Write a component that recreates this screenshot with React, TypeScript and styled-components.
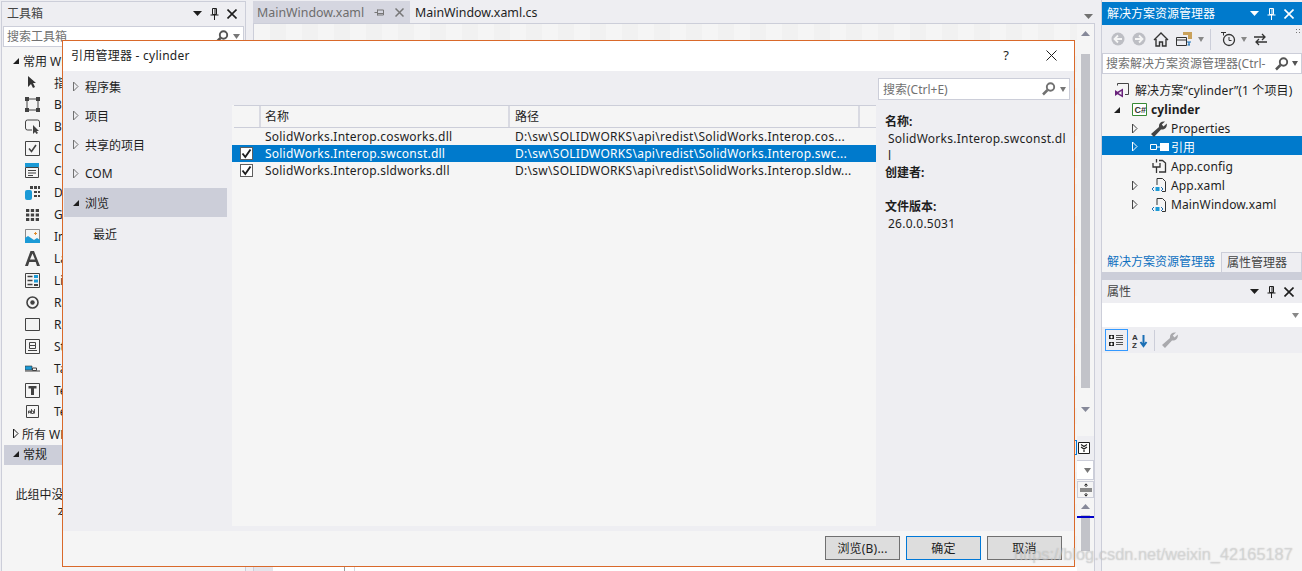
import React from "react";
import styled, { createGlobalStyle } from "styled-components";

const Global = createGlobalStyle`
  html, body { margin: 0; padding: 0; background: #eeeef2; }
  body { font-family: "Noto Sans", "Noto Sans CJK SC", sans-serif; font-size: 12px; color: #1e1e1e; }
  * { box-sizing: border-box; }
`;

const Page = styled.div`
  position: relative; width: 1302px; height: 571px; overflow: hidden; background: #eeeef2;
  display: flex; align-items: stretch; padding-top: 2px;
`;

/* ---------- tool window chrome ---------- */
const ToolWindow = styled.section<{ $w: number }>`
  width: ${p => p.$w}px; flex: none; display: flex; flex-direction: column;
`;
const ToolboxWindow = styled(ToolWindow)`
  margin: -1px 0 0 1px; border: 1px solid #ccced9; border-bottom: 0; 
`;
const TitleBar = styled.div<{ $active?: boolean }>`
  height: 23px; flex: none; display: flex; align-items: center; padding: 0 8px 0 5px; gap: 6px;
  background: ${p => (p.$active ? "#007acc" : "#eeeef2")};
  color: ${p => (p.$active ? "#ffffff" : "#444444")};
`;
const TitleText = styled.span`white-space: nowrap; line-height: 23px;`;
const Grip = styled.span<{ $light?: boolean }>`
  flex: 1; height: 5px; margin: 0 2px 0 4px;
  background-image: radial-gradient(${p => (p.$light ? "#5aa7dd" : "#b4b5bd")} 0.6px, transparent 0.7px);
  background-size: 2px 2px;
`;
const TitleBtns = styled.span`display: flex; align-items: center; gap: 8px; flex: none;`;

const Search = styled.div`
  display: flex; align-items: center; height: 21px; flex: none; background: #fff;
  border: 1px solid #ccced9; padding: 0 3px 0 3px; color: #717171; white-space: nowrap; overflow: hidden;
`;
const ToolboxSearch = styled(Search)`margin: 1px 1px 0 1px;`;
const SearchText = styled.span`flex: 1; overflow: hidden; line-height: 19px;`;
const Spacer = styled.span<{ $w: number }>`width: ${p => p.$w}px; flex: none;`;

const Tree = styled.div`flex: 1; background: #f5f5f5; min-height: 0;`;
const ToolboxTree = styled(Tree)`padding-top: 3px; margin-top: 0;`;
const ToolHeader = styled.div<{ $sel?: boolean; $h?: number }>`
  display: flex; align-items: center; height: ${p => p.$h ?? 21.95}px; gap: 3px; padding: 0 0 ${p => (p.$sel ? 1 : 0)}px 8px;
  margin-left: 2px; background: ${p => (p.$sel ? "#ccced9" : "transparent")}; white-space: nowrap;
`;
const ToolItem = styled.div`
  display: flex; align-items: center; height: 21.95px; padding-left: 20px; gap: 12px; white-space: nowrap;
`;
const ToolIcon = styled.span`width: 20px; height: 20px; flex: none; display: flex; align-items: center; justify-content: center;`;
const EmptyNote = styled.div`
  margin: 21px auto 0; width: 218px; line-height: 17px; text-align: center;
`;

/* ---------- editor ---------- */
const EditorCol = styled.main`
  margin-left: 7px; width: 842px; flex: none; display: flex; flex-direction: column; margin-top: -2px;
`;
const TabStrip = styled.div`height: 23px; flex: none; display: flex; align-items: flex-end;`;
const DocTab = styled.div<{ $dim?: boolean }>`
  height: 22px; padding: 1px 5px 0 ${p => (p.$dim ? 4 : 5)}px; display: flex; align-items: center; gap: 10px;
  background: ${p => (p.$dim ? "#d5d6e0" : "transparent")}; color: ${p => (p.$dim ? "#6d6d6d" : "#1e1e1e")};
  font-size: 12.4px; white-space: nowrap;
`;
const DimTab = styled(DocTab)`width: 157px; gap: 10px;`;
const StripArrow = styled.span`margin: 0 2px 4px auto;`;
const EditorBody = styled.div`flex: 1; display: flex; border: 1px solid #ccced9; border-bottom: 0; min-height: 0; background: #f5f5f5;`;
const SurfaceCol = styled.div`flex: 1; display: flex; flex-direction: column; min-width: 0;`;
const Surface = styled.div`
  flex: 1;
  background-color: #f5f5f5;
  background-image: conic-gradient(#f1f1f1 25%, transparent 0 50%, #f1f1f1 0 75%, transparent 0);
  background-size: 32px 32px;
`;
const SurfaceFooter = styled.div`height: 4px; flex: none; background: #fff; display: flex;`;
const FooterTab = styled.span`width: 19px; flex: none; background: #e4e4ea; margin-right: 71px;`;
const FooterLine = styled.span<{ $c: string; $r: number }>`width: 1px; flex: none; background: ${p => p.$c}; margin-right: ${p => p.$r}px;`;
const ScrollCol = styled.div`width: 17px; flex: none; display: flex; flex-direction: column; align-items: center; padding-top: 7px; background: #f5f5f5;`;
const Thumb = styled.div<{ $h: number; $mt: number }>`
  width: 9px; height: ${p => p.$h}px; margin-top: ${p => p.$mt}px; background: #c2c3c9; flex: none;
`;
const ArrowGap = styled.span<{ $h: number }>`height: ${p => p.$h}px; flex: none;`;
const ZoomStrip = styled.div`
  position: relative; margin-top: 24px; width: 100%; height: 24px; background: #eeeef2; flex: none; display: flex; align-items: center; justify-content: center; padding-right: 3px;
`;
const FocusBracket = styled.span`
  position: absolute; left: -2px; top: 4px; width: 2px; height: 15px; border: 1px solid #0078d7; border-left: 0;
`;
const MiniCombo = styled.div`
  width: 100%; height: 20px; background: #fff; border: 1px solid #ccced9; border-left: 0; flex: none; display: flex; align-items: center; justify-content: flex-end; padding-right: 2px;
`;
const SplitBtn = styled.div`
  margin-top: 1px; width: 100%; height: 17px; border: 1px solid #ccced9; flex: none; display: flex; align-items: center; justify-content: center;
`;
const BlueLine = styled.div`position: absolute; left: 0; right: 0; top: 1px; height: 2px; background: #0000c8;`;
const LowerThumb = styled.div`position: relative; width: 100%; margin-top: 6px; flex: none; display: flex; justify-content: center; height: 36px;`;

const Gutter = styled.div`width: 7px; flex: none; margin-top: -2px; border-right: 1px solid #ccced9;`;

/* ---------- solution explorer ---------- */
const SolutionToolbar = styled.div`height: 28px; display: flex; align-items: center; padding: 0 0 0 9px; flex: none; position: relative;`;
const ToolSep = styled.span<{ $l?: number; $r?: number }>`width: 1px; height: 21px; background: #ccced9; margin: 0 ${p => p.$r ?? 9}px 0 ${p => p.$l ?? 6}px; flex: none;`;
const SolutionTree = styled(Tree)`flex: none; height: 178px; padding-top: 5px;`;
const SolRow = styled.div<{ $sel?: boolean; $indent: number; $h?: number; $bold?: boolean; $low?: boolean }>`
  display: flex; align-items: center; height: ${p => p.$h ?? 19}px; padding: ${p => (p.$low ? 4 : 2)}px 0 0 ${p => p.$indent}px; gap: 5px; white-space: nowrap;
  background: ${p => (p.$sel ? "#007acc" : "transparent")}; color: ${p => (p.$sel ? "#fff" : "#1e1e1e")};
  font-weight: ${p => (p.$bold ? 700 : 400)}; letter-spacing: 0.12px;
`;
const Expander = styled.span`width: 8px; flex: none; display: flex; align-items: center; justify-content: center;`;
const SolIcon = styled.span`width: 16px; height: 16px; flex: none; display: flex; align-items: center; justify-content: center; margin-right: -1px;`;
const PanelTabs = styled.div`height: 20px; flex: none; display: flex; background: #eeeef2; margin-top: 0;`;
const PanelTab = styled.div<{ $on?: boolean }>`
  height: 20px; padding: 0 6px 0 5px; line-height: 19px; white-space: nowrap; flex: ${p => (p.$on ? "none" : 1)};
  color: ${p => (p.$on ? "#0e70c0" : "#444")};
  background: ${p => (p.$on ? "#f5f5f5" : "#eeeef2")};
  border: ${p => (p.$on ? "0" : "1px solid #ccced9")}; border-bottom: 0;
`;
const PanelGap = styled.div`height: 8px; flex: none; background: #ccced9;`;
const PropCombo = styled.div`height: 24px; flex: none; background: #fff; display: flex; align-items: center; justify-content: flex-end; padding-right: 3px;`;
const PropToolbar = styled.div`height: 26px; flex: none; display: flex; align-items: center; padding-left: 3px; background: #eeeef2;`;
const PropBtn = styled.span<{ $on?: boolean }>`
  width: 23px; height: 22px; display: flex; align-items: center; justify-content: center; flex: none;
  border: 1px solid ${p => (p.$on ? "#3399ff" : "transparent")};
`;
const PropFill = styled.div`flex: 1; background: #f5f5f5;`;

/* ---------- dialog ---------- */
const Dialog = styled.div`
  position: absolute; left: 62px; top: 40px; width: 1013px; height: 527px; display: flex; flex-direction: column;
  border: 1px solid #d9692a; background: #eeeef2;
`;
const DialogTitle = styled.div`
  height: 30px; flex: none; background: #fff; display: flex; align-items: center; padding: 0 17px 3px 8px;
`;
const DialogName = styled.span`flex: 1; letter-spacing: 0.25px;`;
const HelpMark = styled.span`font-size: 13px; margin-right: 37px; color: #1e1e1e;`;
const DialogClose = styled.span`display: block; margin-top: 2px;`;
const DialogBody = styled.div`flex: 1; display: flex; min-height: 0; padding-left: 1px;`;
const Nav = styled.nav`width: 163px; flex: none; padding-top: 1px;`;
const NavRow = styled.div<{ $sel?: boolean; $sub?: boolean }>`
  display: flex; align-items: center; height: 29px; gap: ${p => (p.$sel ? 5 : 6)}px;
  padding-left: ${p => (p.$sub ? "29px" : "8px")};
  background: ${p => (p.$sel ? "#ccced9" : "transparent")};
  margin-top: ${p => (p.$sub ? "2px" : "0")};
  white-space: nowrap;
`;
const Center = styled.div`
  margin: 34px 0 5px 5px; width: 644px; flex: none; background: #f5f5f5; display: flex; flex-direction: column;
`;
const ColHeader = styled.div`
  height: 23px; flex: none; display: flex; border-top: 1px solid #ccced9; border-bottom: 1px solid #ccced9; margin-left: 2px;
`;
const ColCell = styled.div<{ $w: number; $p?: number }>`
  width: ${p => p.$w}px; flex: none; border-right: 2px solid #d9dae2; padding-left: ${p => p.$p ?? 4}px; line-height: 21px; white-space: nowrap;
`;
const FileRow = styled.div<{ $sel?: boolean }>`
  height: 17px; display: flex; align-items: center; flex: none; white-space: nowrap;
  background: ${p => (p.$sel ? "#007acc" : "transparent")}; color: ${p => (p.$sel ? "#fff" : "#1e1e1e")};
`;
const CheckCell = styled.span`width: 33px; flex: none; display: flex; justify-content: flex-start; padding-left: 8px;`;
const CheckBox = styled.span`
  width: 13px; height: 13px; border: 1px solid #5f5f5f; background: #fff; display: flex; align-items: center; justify-content: center; flex: none;
`;
const NameCell = styled.span`width: 250px; flex: none; letter-spacing: 0.22px;`;
const PathCell = styled.span`flex: 1; letter-spacing: 0.28px;`;
const Detail = styled.aside`flex: 1; padding: 7px 6px 0 2px; min-width: 0;`;
const DialogSearch = styled(Search)`width: 192px; height: 22px; margin-bottom: 13px; padding-left: 4px;`;
const DetailLabel = styled.div`font-weight: 700; line-height: 17px; padding-left: 7px; height: 17px;`;
const DetailValue = styled.div`line-height: 16.5px; padding: 1px 0 0 10px; letter-spacing: 0.25px;`;
const DetailGap = styled.div`height: 17px;`;
const DialogFooter = styled.div`
  height: 35px; flex: none; background: #f5f5f5; display: flex; justify-content: flex-end; align-items: flex-start; gap: 6px; padding: 5px 12px 0 0;
`;
const DialogBtn = styled.button<{ $primary?: boolean }>`
  width: 75px; height: 24px; background: #dddddd; border: 1px solid ${p => (p.$primary ? "#0078d7" : "#707070")};
  font: inherit; color: #1e1e1e; padding: 0; letter-spacing: 0.2px;
`;
const Watermark = styled.div`
  position: absolute; left: 1014px; top: 545px; font: 16.4px "Liberation Sans", sans-serif; color: rgba(255,255,255,.35);
  text-shadow: 0 0 1px rgba(120,120,120,.5); white-space: nowrap; pointer-events: none;
`;

/* ---------- drawings ---------- */
const Svg = ({ w = 16, h = 16, children }: { w?: number; h?: number; children: React.ReactNode }) => (
  <svg width={w} height={h} viewBox={`0 0 ${w} ${h}`} style={{ display: "block", flex: "none" }}>{children}</svg>
);
const Collapsed = ({ c = "#444" }: { c?: string }) => (
  <Svg w={7} h={11}><path d="M1.5 1v9L6 5.5z" fill="none" stroke={c} strokeWidth="1" /></Svg>
);
const Expanded = ({ c = "#1e1e1e" }: { c?: string }) => (
  <Svg w={8} h={8}><path d="M7 1v6H1z" fill={c} /></Svg>
);
const Caret = ({ c = "#444", w = 9 }: { c?: string; w?: number }) => (
  <Svg w={w} h={5}><path d={`M0 0h${w}L${w / 2} 5z`} fill={c} /></Svg>
);
const CaretUp = () => (
  <Svg w={9} h={5}><path d="M0 5h9L4.500 0z" fill="#868999" /></Svg>
);
const Pin = ({ c = "#1e1e1e" }: { c?: string }) => (
  <Svg w={9} h={12}><path d="M2.5.5h4v6h-4zM5 1v5M.5 7h8M4.500 7v5" fill="none" stroke={c} /></Svg>
);
const Close = ({ c = "#1e1e1e", s = 10, sw = 1.6 }: { c?: string; s?: number; sw?: number }) => (
  <Svg w={s} h={s}><path d={`M.5.5L${s - .5} ${s - .5}M${s - .5} .5L.5 ${s - .5}`} stroke={c} strokeWidth={sw} fill="none" /></Svg>
);
const Magnifier = ({ c = "#555" }: { c?: string }) => (
  <Svg w={15} h={14}><circle cx="9.500" cy="5" r="3.700" fill="none" stroke={c} strokeWidth="1.900" /><path d="M6.500 8L2 12.500" stroke={c} strokeWidth="2.500" /></Svg>
);
const Tick = () => (
  <Svg w={11} h={11}><path d="M1.500 5.500L4.300 9 9.500 1.500" fill="none" stroke="#1e1e1e" strokeWidth="1.900" /></Svg>
);
const Wrench = ({ c = "#444" }: { c?: string }) => (
  <Svg w={16} h={16}><path d="M0 13L8 6C7.500 2.500 10 0 14 .5L10.800 3.500 12.500 5.500 15.800 2.500C16.300 6.500 13.500 9 10 8.500L3 16z" fill={c} /></Svg>
);
const XamlIcon = () => (
  <Svg w={16} h={16}><path d="M6 8V1.500h5.500l3 3V14.500H11" fill="none" stroke="#333" /><path d="M4.500 10h4v4h-4z" fill="#1b9ad6" /><path d="M3 10l-2 2 2 2M10 10l2 2-2 2" fill="none" stroke="#1b6fb5" /></Svg>
);
const box = "#424242";
const toolIcons: React.ReactNode[] = [
  <Svg key="p"><path d="M4 1v11l3-3 2 4 2-1-2-4h3z" fill="#333" /></Svg>,
  <Svg w={15} h={15} key="b"><path d="M2 2h11v11H2z" fill="none" stroke={box} /><path d="M0 0h4v4H0zM11 0h4v4h-4zM0 11h4v4H0zM11 11h4v4h-4z" fill={box} /></Svg>,
  <Svg w={15} h={15} key="bt"><path d="M2.500 1h10a2 2 0 0 1 2 2v5M7 11H2.500a2 2 0 0 1-2-2V3a2 2 0 0 1 2-2" fill="none" stroke={box} /><path d="M8 6v9l2-2 1.500 2 1.500-1-1.500-2H14z" fill={box} /></Svg>,
  <Svg w={15} h={15} key="c"><path d="M.5.5h14v14H.5z" fill="#f5f5f5" stroke={box} /><path d="M4 7.500l2.500 3L11 4" fill="none" stroke={box} strokeWidth="1.600" /></Svg>,
  <Svg w={15} h={15} key="cb"><path d="M.5 4.500h13v10H.5z" fill="#f5f5f5" stroke={box} /><path d="M0 0h14v4H0z" fill="#1b9ad6" /><path d="M3 7.500h8M3 10h8M3 12.500h5" stroke={box} /></Svg>,
  <Svg w={15} h={15} key="d"><rect x="0" y="5" width="7" height="10" rx="2" fill="#1b9ad6" /><path d="M5 1h3v3H5zM9 1h3v3H9zM13 1h2v3h-2zM9 6h3v2H9zM13 6h2v2h-2zM9 10h3v2H9zM13 10h2v2h-2z" fill={box} /></Svg>,
  <Svg w={13} h={13} key="g"><path d="M0 1h3.300v3H0zM4.800 1h3.300v3H4.800zM9.700 1H13v3H9.700zM0 5.500h3.300v3H0zM4.800 5.500h3.300v3H4.800zM9.700 5.500H13v3H9.700zM0 10h3.300v3H0zM4.800 10h3.300v3H4.800zM9.700 10H13v3H9.700z" fill={box} /></Svg>,
  <Svg w={15} h={15} key="i"><path d="M.5.500h14v13H.5z" fill="#f5f5f5" stroke={box} strokeOpacity=".6" /><path d="M0 14V9l3-2 3 2 3 2 3-2 3 2v3z" fill="#1b9ad6" /><path d="M10 3h1v1h1v1h-1v1h-1V5H9V4h1z" fill="#e08b2d" /></Svg>,
  <Svg w={15} h={15} key="a"><path d="M0 15L5.500 0h3.500L15 15h-3l-1.300-4H4.300L3 15zM5 8.500h5L7.500 2.500z" fill={box} /></Svg>,
  <Svg w={15} h={15} key="l"><path d="M.5 .5h14v14H.5z" fill="#f5f5f5" stroke={box} /><path d="M2.500 3.500h5M2.500 7.500h5M2.500 11.500h5" stroke={box} strokeWidth="1.300" /><path d="M9 2h4v3H9zM9 6.500h4v3H9z" fill="#1b9ad6" /><path d="M9 11h4v2H9z" fill={box} /></Svg>,
  <Svg w={13} h={13} key="r"><circle cx="6.500" cy="6.500" r="5.500" fill="none" stroke={box} strokeWidth="1.600" /><circle cx="6.500" cy="6.500" r="2.200" fill={box} /></Svg>,
  <Svg w={15} h={13} key="re"><path d="M.5.500h14v12H.5z" fill="#f2f3f3" stroke={box} /></Svg>,
  <Svg w={15} h={15} key="s"><path d="M.5.5h14v14H.5z" fill="#f5f5f5" stroke={box} /><path d="M4.500 3.500h6v3h-6zM4.500 6.500h6v3h-6zM3 11.500h9" fill="none" stroke={box} /></Svg>,
  <Svg w={15} h={7} key="t"><path d="M0 1h7v4H0z" fill="#1b9ad6" stroke="#333" strokeWidth=".6" /><path d="M7.500 3h4v2.500h-4zM0 6h15" fill="none" stroke={box} /></Svg>,
  <Svg w={15} h={15} key="tb"><path d="M.5.5h14v14H.5z" fill="#f5f5f5" stroke={box} /><path d="M3.500 3h8v2.500H9V12H6V5.500H3.500z" fill={box} /></Svg>,
  <Svg w={13} h={13} key="tx"><path d="M.5.5h12v12H.5z" fill="#f5f5f5" stroke={box} /><path d="M2.500 8.500V6h2v2.500M2.500 7.300h2M5.500 4v4.500h2V6h-2M8.500 4v4.500" fill="none" stroke={box} strokeWidth=".9" /></Svg>,
];
const toolLabels = ["指针","Border","Button","CheckBox","ComboBox","DataGrid","Grid","Image","Label","ListBox","RadioButton","Rectangle","StackPanel","TabControl","TextBlock","TextBox"];
const BackBtn = ({ flip }: { flip?: boolean }) => (
  <Svg w={14} h={14}><circle cx="7" cy="7" r="6.500" fill="#bdbec4" /><path d={flip ? "M3 7h7M7 3.500L10.500 7 7 10.500" : "M11 7H4M7 3.500L3.500 7 7 10.500"} stroke="#f5f5f5" strokeWidth="1.800" fill="none" /></Svg>
);
const Dots = styled.span`position: absolute; right: 2px; top: 3px; width: 5px; height: 5px;
  background-image: radial-gradient(#777 .7px, transparent .8px); background-size: 3px 3px;`;

export default function App() {
  return (
    <Page>
      <Global />
      <ToolboxWindow $w={245}>
        <TitleBar>
          <TitleText>工具箱</TitleText><Grip />
          <TitleBtns><Caret c="#1e1e1e" /><Pin /><Close /></TitleBtns>
        </TitleBar>
        <ToolboxSearch><SearchText>搜索工具箱</SearchText><Magnifier /><Spacer $w={4} /><Caret c="#777" w={7} /></ToolboxSearch>
        <ToolboxTree>
          <ToolHeader><Expanded /><span>常用 WPF 控件</span></ToolHeader>
          {toolLabels.map((t, i) => (
            <ToolItem key={t}><ToolIcon>{toolIcons[i]}</ToolIcon><span>{t}</span></ToolItem>
          ))}
          <ToolHeader><Collapsed c="#1e1e1e" /><span>所有 WPF 控件</span></ToolHeader>
          <ToolHeader $sel $h={20}><Expanded /><span>常规</span></ToolHeader>
          <EmptyNote>此组中没有可用的控件。将某项拖至此文本可将其添加到工具箱。</EmptyNote>
        </ToolboxTree>
      </ToolboxWindow>

      <EditorCol>
        <TabStrip>
          <DimTab $dim>
            <span>MainWindow.xaml</span>
            <Svg w={11} h={9}><path d="M.5 4.500h3M3.500 1.500v6M3.500 2h6v5h-6M3.500 5.500h6" fill="none" stroke="#777" /></Svg>
            <Close c="#777" s={9} sw={1.500} />
          </DimTab>
          <DocTab><span>MainWindow.xaml.cs</span></DocTab>
          <StripArrow><Caret c="#717171" w={9} /></StripArrow>
        </TabStrip>
        <EditorBody>
          <SurfaceCol>
            <Surface />
            <SurfaceFooter>
              <FooterTab />
              <FooterLine $c="#9a9a9a" $r={9} />
              <FooterLine $c="#d5d6de" $r={0} />
            </SurfaceFooter>
          </SurfaceCol>
          <ScrollCol>
            <CaretUp />
            <Thumb $h={334} $mt={18} />
            <ArrowGap $h={19} />
            <Caret c="#868999" w={9} />
            <ZoomStrip>
              <FocusBracket />
              <Svg w={12} h={12}><path d="M.5.5h11v11H.5z" fill="#fff" stroke="#1e1e1e" /><path d="M3 2.500l3 2 3-2M3 5l3 2 3-2M6 8v2" fill="none" stroke="#1e1e1e" strokeWidth="1.200" /></Svg>
            </ZoomStrip>
            <MiniCombo><Caret c="#777" w={7} /></MiniCombo>
            <SplitBtn>
              <Svg w={12} h={14}><path d="M0 6h12M0 8h12" stroke="#1e1e1e" strokeWidth="1.100" /><path d="M6 1v3M6 10v3M4.500 2.500L6 .8l1.500 1.700M4.500 11.500L6 13.200l1.500-1.700" fill="none" stroke="#1e1e1e" /></Svg>
            </SplitBtn>
            <ArrowGap $h={6} />
            <CaretUp />
            <LowerThumb><Thumb $h={36} $mt={0} /><BlueLine /></LowerThumb>
          </ScrollCol>
        </EditorBody>
      </EditorCol>
      <Gutter />

      <ToolWindow $w={200}>
        <TitleBar $active>
          <TitleText>解决方案资源管理器</TitleText><Grip $light />
          <TitleBtns><Caret c="#fff" /><Pin c="#fff" /><Close c="#fff" /></TitleBtns>
        </TitleBar>
        <SolutionToolbar>
          <BackBtn /><Spacer $w={7} /><BackBtn flip /><Spacer $w={7} />
          <Svg w={16} h={15}><path d="M1 8l7-7 7 7M3 7v7h3.500v-4h3v4H13V7" fill="none" stroke="#333" strokeWidth="1.400" /></Svg>
          <Spacer $w={6} />
          <Svg w={18} h={16}><path d="M1.500 6.500h10v8h-10zM1.500 9h10" fill="none" stroke="#333" /><path d="M8 1h9v7H13V4H8z" fill="#c9a15b" /><path d="M12 11h4M14 11v3M12.500 14H15" stroke="#1b6fb5" fill="none" strokeWidth="1.200" /></Svg>
          <Spacer $w={5} /><Caret c="#888" w={6} />
          <ToolSep />
          <Svg w={16} h={16}><circle cx="9" cy="9" r="5.500" fill="none" stroke="#333" strokeWidth="1.300" /><path d="M9 6v3.500h2.500M1 1.500h5M3.500 1.500v3" fill="none" stroke="#333" /></Svg>
          <Spacer $w={5} /><Caret c="#888" w={6} /><Spacer $w={7} />
          <Svg w={13} h={13}><path d="M0 4h11M8 1l3 3-3 3M13 9H2M5 6L2 9l3 3" fill="none" stroke="#333" strokeWidth="1.300" /></Svg>
          <Dots />
        </SolutionToolbar>
        <Search><SearchText>搜索解决方案资源管理器(Ctrl-</SearchText><Magnifier /><Spacer $w={3} /><Caret c="#555" w={6} /></Search>
        <SolutionTree>
          <SolRow $indent={13}>
            <SolIcon><Svg w={16} h={16}><path d="M2.500 3.500v-2h11v11H10" fill="none" stroke="#444" /><path d="M0 8l2.500 1.800L8 6.500v9l-5.500-3.300L0 14zM3.500 11l3 2V9z" fill="#68217a" fillRule="evenodd" /></Svg></SolIcon>
            <span>解决方案“cylinder”(1 个项目)</span>
          </SolRow>
          <SolRow $indent={11} $bold $low>
            <Expander><Expanded /></Expander>
            <Spacer $w={0} />
            <SolIcon><Svg w={15} h={13}><path d="M.5.5h14v12H.5z" fill="#fff" stroke="#388a34" /><text x="2.500" y="10" fontSize="9" fontWeight="700" fill="#333" fontFamily="Liberation Sans">C#</text></Svg></SolIcon>
            <span>cylinder</span>
          </SolRow>
          <SolRow $indent={28} $low><Expander><Collapsed /></Expander><Spacer $w={3} /><SolIcon><Wrench /></SolIcon><span>Properties</span></SolRow>
          <SolRow $indent={28} $sel><Expander><Collapsed c="#fff" /></Expander><Spacer $w={3} /><SolIcon><Svg w={19} h={8}><path d="M.5 1.500h6v5h-6z" fill="none" stroke="#fff" /><path d="M7 3.500h3v1H7zM10 0h9v8h-9z" fill="#fff" /></Svg></SolIcon><span>引用</span></SolRow>
          <SolRow $indent={49} $h={20}><SolIcon><Svg w={15} h={16}><path d="M7 2.500h3.500L13.500 5v9H7M4.500 1v3.500M1 5v4h7V5M4.500 9v6" fill="none" stroke="#333" strokeWidth="1.300" /></Svg></SolIcon><span>App.config</span></SolRow>
          <SolRow $indent={28} $h={18}><Expander><Collapsed /></Expander><Spacer $w={3} /><SolIcon><XamlIcon /></SolIcon><span>App.xaml</span></SolRow>
          <SolRow $indent={28} $low><Expander><Collapsed /></Expander><Spacer $w={3} /><SolIcon><XamlIcon /></SolIcon><span>MainWindow.xaml</span></SolRow>
        </SolutionTree>
        <PanelTabs>
          <PanelTab $on>解决方案资源管理器</PanelTab>
          <PanelTab>属性管理器</PanelTab>
        </PanelTabs>
        <PanelGap />
        <TitleBar>
          <TitleText>属性</TitleText><Grip />
          <TitleBtns><Caret c="#1e1e1e" /><Pin /><Close /></TitleBtns>
        </TitleBar>
        <PropCombo><Caret c="#888" w={7} /></PropCombo>
        <PropToolbar>
          <PropBtn $on><Svg w={15} h={13}><path d="M0 1h5v4H0zM0 8h5v4H0z" fill="#1e1e1e" /><path d="M1 3h3M2.500 1.700v2.600M1 10h3M2.500 8.700v2.600" stroke="#fff" /><path d="M7 1.500h7M7 3.500h7M7 5.500h7M7 8.500h7M7 10.500h7" stroke="#555" /></Svg></PropBtn>
          <PropBtn><Svg w={16} h={15}><text x="0" y="7" fontSize="8" fontWeight="700" fill="#333" fontFamily="Liberation Sans">A</text><text x="0" y="15" fontSize="8" fontWeight="700" fill="#333" fontFamily="Liberation Sans">Z</text><path d="M11.500 2v10M8.500 9l3 4 3-4" fill="none" stroke="#1b6fb5" strokeWidth="2" /></Svg></PropBtn>
          <ToolSep $l={3} $r={3} />
          <PropBtn><Wrench c="#a9a9ad" /></PropBtn>
        </PropToolbar>
        <PropFill />
      </ToolWindow>

      <Dialog role="dialog">
        <DialogTitle>
          <DialogName>引用管理器 - cylinder</DialogName>
          <HelpMark>?</HelpMark>
          <DialogClose><Close c="#1e1e1e" s={11} sw={1} /></DialogClose>
        </DialogTitle>
        <DialogBody>
          <Nav>
            <NavRow><Collapsed c="#717171" /><span>程序集</span></NavRow>
            <NavRow><Collapsed c="#717171" /><span>项目</span></NavRow>
            <NavRow><Collapsed c="#717171" /><span>共享的项目</span></NavRow>
            <NavRow><Collapsed c="#717171" /><span>COM</span></NavRow>
            <NavRow $sel><Expanded /><span>浏览</span></NavRow>
            <NavRow $sub><span>最近</span></NavRow>
          </Nav>
          <Center>
            <ColHeader>
              <ColCell $w={27} />
              <ColCell $w={249}>名称</ColCell>
              <ColCell $w={350} $p={5}>路径</ColCell>
            </ColHeader>
            <FileRow><CheckCell /><NameCell>SolidWorks.Interop.cosworks.dll</NameCell><PathCell>D:\sw\SOLIDWORKS\api\redist\SolidWorks.Interop.cos...</PathCell></FileRow>
            <FileRow $sel><CheckCell><CheckBox><Tick /></CheckBox></CheckCell><NameCell>SolidWorks.Interop.swconst.dll</NameCell><PathCell>D:\sw\SOLIDWORKS\api\redist\SolidWorks.Interop.swc...</PathCell></FileRow>
            <FileRow><CheckCell><CheckBox><Tick /></CheckBox></CheckCell><NameCell>SolidWorks.Interop.sldworks.dll</NameCell><PathCell>D:\sw\SOLIDWORKS\api\redist\SolidWorks.Interop.sldw...</PathCell></FileRow>
          </Center>
          <Detail>
            <DialogSearch><SearchText>搜索(Ctrl+E)</SearchText><Magnifier c="#717171" /><Spacer $w={4} /><Caret c="#777" w={6} /></DialogSearch>
            <DetailLabel>名称:</DetailLabel>
            <DetailValue>SolidWorks.Interop.swconst.dl<br />l</DetailValue>
            <DetailLabel>创建者:</DetailLabel>
            <DetailGap />
            <DetailLabel>文件版本:</DetailLabel>
            <DetailValue>26.0.0.5031</DetailValue>
          </Detail>
        </DialogBody>
        <DialogFooter>
          <DialogBtn>浏览(B)...</DialogBtn>
          <DialogBtn $primary>确定</DialogBtn>
          <DialogBtn>取消</DialogBtn>
        </DialogFooter>
      </Dialog>
      <Watermark>https://blog.csdn.net/weixin_42165187</Watermark>
    </Page>
  );
}
